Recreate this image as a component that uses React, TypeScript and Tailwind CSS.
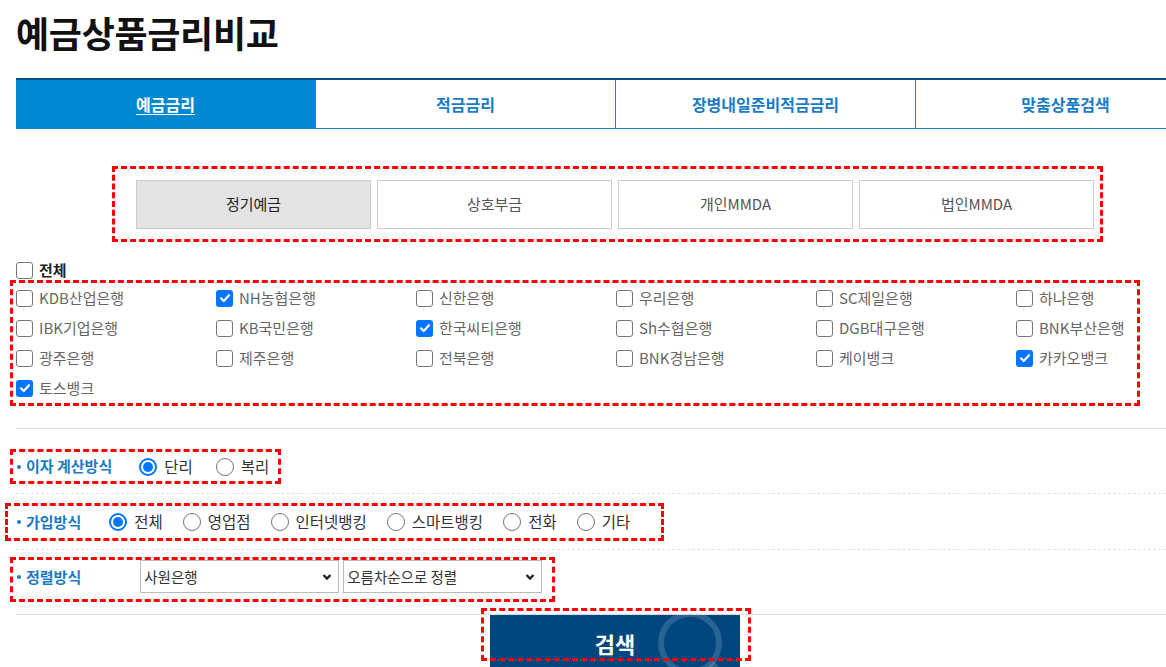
import React from "react";

const banks: [string, boolean][] = [
  ["KDB산업은행", false],
  ["NH농협은행", true],
  ["신한은행", false],
  ["우리은행", false],
  ["SC제일은행", false],
  ["하나은행", false],
  ["IBK기업은행", false],
  ["KB국민은행", false],
  ["한국씨티은행", true],
  ["Sh수협은행", false],
  ["DGB대구은행", false],
  ["BNK부산은행", false],
  ["광주은행", false],
  ["제주은행", false],
  ["전북은행", false],
  ["BNK경남은행", false],
  ["케이뱅크", false],
  ["카카오뱅크", true],
  ["토스뱅크", true],
];

const tabs = ["예금금리", "적금금리", "장병내일준비적금금리", "맞춤상품검색"];
const subTabs = ["정기예금", "상호부금", "개인MMDA", "법인MMDA"];

function Check({ checked }: { checked: boolean }) {
  return checked ? (
    <span className="flex h-[17px] w-[17px] shrink-0 items-center justify-center rounded-[3px] bg-[#0075ff]">
      <svg viewBox="0 0 12 12" className="h-[12px] w-[12px]">
        <path d="M2 6.3 4.8 9 10 3.2" fill="none" stroke="#fff" strokeWidth="2.2" strokeLinecap="round" strokeLinejoin="round" />
      </svg>
    </span>
  ) : (
    <span className="h-[17px] w-[17px] shrink-0 rounded-[3px] border border-[#767676] bg-white" />
  );
}

function Radio({ checked, label }: { checked: boolean; label: string }) {
  return (
    <label className="flex items-center gap-[7px]">
      {checked ? (
        <span className="flex h-[18px] w-[18px] items-center justify-center rounded-full border-2 border-[#0075ff]">
          <span className="h-[10px] w-[10px] rounded-full bg-[#0075ff]" />
        </span>
      ) : (
        <span className="h-[18px] w-[18px] rounded-full border border-[#767676]" />
      )}
      <span className="text-[15.5px] text-[#333]">{label}</span>
    </label>
  );
}

function Label({ text }: { text: string }) {
  return (
    <div className="flex items-center gap-[5px] text-[15px] font-bold text-[#1a7bc6]">
      <span className="h-[4px] w-[4px] rounded-full bg-[#1a7bc6]" />
      {text}
    </div>
  );
}

function Select({ value, width }: { value: string; width: string }) {
  return (
    <div className={`flex h-[33px] items-center justify-between border border-[#bbb] bg-white pl-[3px] pr-[6px] text-[14.5px] text-[#333] ${width}`}>
      <span>{value}</span>
      <svg viewBox="0 0 10 10" className="h-[10px] w-[10px]">
        <path d="M1.5 3 5 6.5 8.5 3" fill="none" stroke="#222" strokeWidth="2.4" />
      </svg>
    </div>
  );
}

export default function App() {
  return (
    <div
      className="relative h-[667px] w-[1166px] overflow-hidden bg-white pl-[16px]"
      style={{ fontFamily: '"Noto Sans CJK KR", "Noto Sans", sans-serif' }}
    >
      <h1 className="pt-[10px] text-[36px] font-bold leading-[44px] tracking-[-0.3px] text-[#111]">
        예금상품금리비교
      </h1>

      <div className="mt-[24px] flex w-[1200px] border-t-2 border-b border-t-[#00508f] border-b-[#0088d1]">
        {tabs.map((t, i) => (
          <div
            key={t}
            className={`flex h-[48px] w-[300px] items-center justify-center border-r border-[#0088d1] text-[16px] font-bold ${
              i === 0 ? "bg-[#0088d1] text-white underline underline-offset-[3px]" : "bg-white text-[#1a7bc6]"
            }`}
          >
            {t}
          </div>
        ))}
      </div>

      <div className="ml-[96px] mt-[37px] flex h-[76px] w-[991px] items-center gap-[6px] border-[3px] border-dashed border-[#ff0000] pl-[21px]">
        {subTabs.map((t, i) => (
          <div
            key={t}
            className={`flex h-[49px] w-[235px] items-center justify-center border border-[#ccc] text-[15px] ${
              i === 0 ? "bg-[#e3e3e3] text-[#222]" : "bg-white text-[#555]"
            }`}
          >
            {t}
          </div>
        ))}
      </div>

      <div className="mt-[18px] flex h-[20px] items-center gap-[6px]">
        <Check checked={false} />
        <span className="text-[15px] font-bold text-[#222]">전체</span>
      </div>

      <div className="ml-[-6px] grid w-[1130px] grid-cols-[repeat(6,200px)] border-[3px] border-dashed border-[#ff0000] pl-[3px]">
        {banks.map(([name, on]) => (
          <div key={name} className="flex h-[30px] items-center gap-[6px]">
            <Check checked={on} />
            <span className="text-[15px] text-[#666]">{name}</span>
          </div>
        ))}
      </div>

      <div className="mt-[22px] h-px bg-[#e4e4e4]" />

      <div className="ml-[-6px] mt-[20px] flex h-[35px] w-[271px] items-center border-[3px] border-dashed border-[#ff0000] pl-[4px]">
        <Label text="이자 계산방식" />
        <div className="ml-[27px] flex gap-[23px]">
          <Radio checked label="단리" />
          <Radio checked={false} label="복리" />
        </div>
      </div>

      <div className="mt-[9px] border-t border-dashed border-[#e2e2e2]" />

      <div className="ml-[-11px] mt-[9px] flex h-[38px] w-[659px] items-center border-[3px] border-dashed border-[#ff0000] pl-[9px]">
        <Label text="가입방식" />
        <div className="ml-[28px] flex gap-[20px]">
          <Radio checked label="전체" />
          <Radio checked={false} label="영업점" />
          <Radio checked={false} label="인터넷뱅킹" />
          <Radio checked={false} label="스마트뱅킹" />
          <Radio checked={false} label="전화" />
          <Radio checked={false} label="기타" />
        </div>
      </div>

      <div className="mt-[8px] border-t border-dashed border-[#e2e2e2]" />

      <div className="ml-[-6px] mt-[7px] flex h-[45px] w-[545px] items-start border-[3px] border-dashed border-[#ff0000] pl-[4px]">
        <div className="mt-[6px]">
          <Label text="정렬방식" />
        </div>
        <div className="ml-[59px] flex gap-[4px]">
          <Select value="사원은행" width="w-[199px]" />
          <Select value="오름차순으로 정렬" width="w-[199px]" />
        </div>
      </div>

      <div className="mt-[12px] h-px bg-[#ddd]" />

      <div className="relative ml-[474px] flex h-[56px] w-[250px] items-center justify-center overflow-hidden bg-[#00467f]">
        <svg viewBox="0 0 100 80" className="absolute left-[160px] top-[-6px] h-[80px] w-[100px]">
          <circle cx="40" cy="34" r="29" fill="none" stroke="rgba(255,255,255,0.16)" strokeWidth="6" />
          <path d="M61 55 80 76" stroke="rgba(255,255,255,0.16)" strokeWidth="8" />
        </svg>
        <span className="relative text-[22px] font-bold text-white">검색</span>
      </div>

      <div className="absolute left-[481px] top-[608px] h-[53px] w-[270px] border-[3px] border-dashed border-[#ff0000]" />
    </div>
  );
}
